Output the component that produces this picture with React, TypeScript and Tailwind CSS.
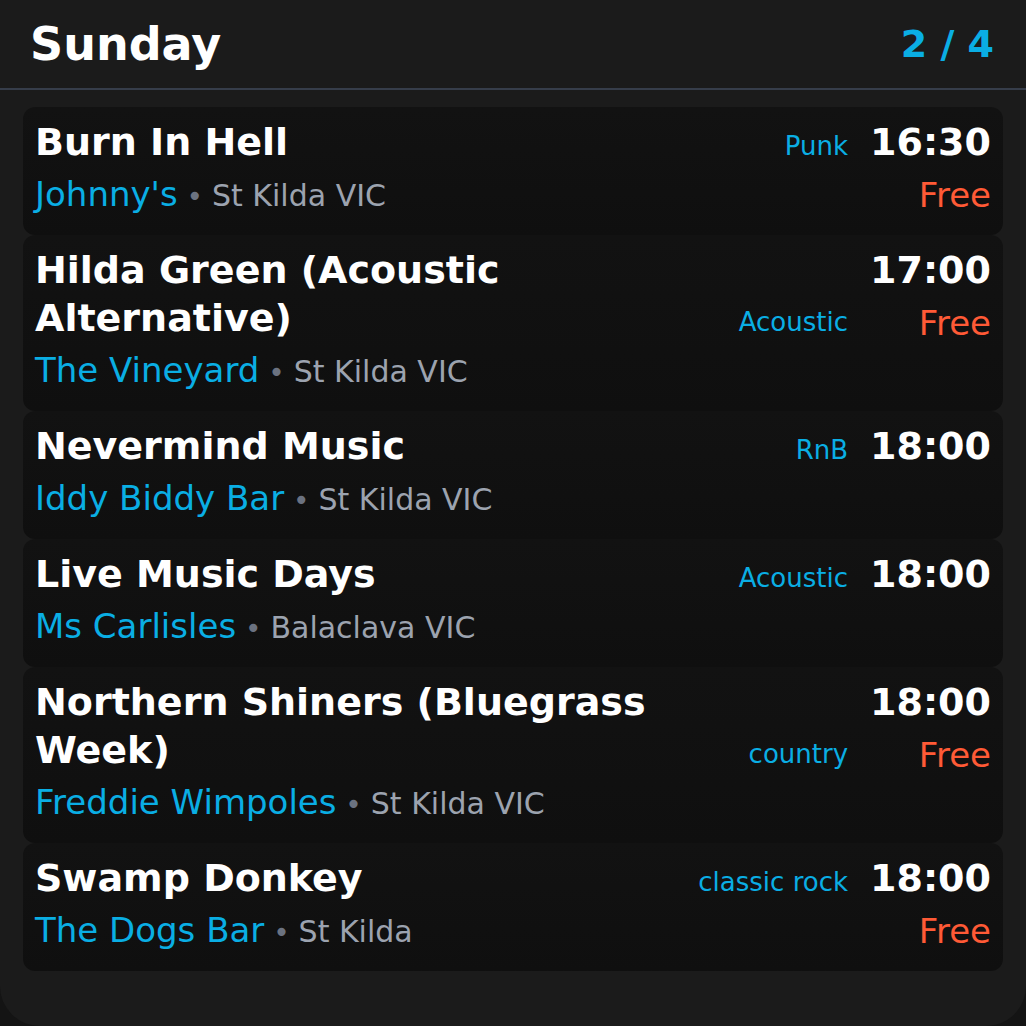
import React from "react";

type Gig = {
  title: string;
  venue: string;
  suburb: string;
  genre: string;
  time: string;
  free: boolean;
};

const gigs: Gig[] = [
  { title: "Burn In Hell", venue: "Johnny's", suburb: "St Kilda VIC", genre: "Punk", time: "16:30", free: true },
  { title: "Hilda Green (Acoustic Alternative)", venue: "The Vineyard", suburb: "St Kilda VIC", genre: "Acoustic", time: "17:00", free: true },
  { title: "Nevermind Music", venue: "Iddy Biddy Bar", suburb: "St Kilda VIC", genre: "RnB", time: "18:00", free: false },
  { title: "Live Music Days", venue: "Ms Carlisles", suburb: "Balaclava VIC", genre: "Acoustic", time: "18:00", free: false },
  { title: "Northern Shiners (Bluegrass Week)", venue: "Freddie Wimpoles", suburb: "St Kilda VIC", genre: "country", time: "18:00", free: true },
  { title: "Swamp Donkey", venue: "The Dogs Bar", suburb: "St Kilda", genre: "classic rock", time: "18:00", free: true },
];

function GigCard({ gig }: { gig: Gig }) {
  return (
    <div className="flex min-h-[128px] gap-[22px] rounded-xl bg-gradient-to-b from-[#121212] to-[#0f0f0f] px-3 pt-[11px] pb-[18px]">
      <div className="flex-1 min-w-0">
        <div className="flex gap-6 [align-items:last_baseline]">
          <h2 className="flex-1 text-[38px] leading-[48px] font-bold text-white">{gig.title}</h2>
          <span className="shrink-0 text-[26px] leading-[32px] text-[#0aaee4]">{gig.genre}</span>
        </div>
        <p className="mt-[8px] text-[34px] leading-[40px] whitespace-nowrap">
          <span className="text-[#0aaee4]">{gig.venue}</span>
          <span className="text-[28px] text-[#6b7280]"> • </span>
          <span className="text-[30px] text-[#9ca3af]">{gig.suburb}</span>
        </p>
      </div>
      <div className="flex flex-col items-end shrink-0">
        <span className="text-[38px] leading-[48px] font-bold text-white">{gig.time}</span>
        {gig.free && (
          <span className="mt-[9px] text-[34px] leading-[40px] text-[#ff5a36]">Free</span>
        )}
      </div>
    </div>
  );
}

export default function App() {
  return (
    <div className="min-h-screen bg-[#141414]" style={{ fontFamily: '"DejaVu Sans", Verdana, sans-serif' }}>
      <div className="h-[1026px] rounded-b-[40px] bg-[#1b1b1b] overflow-hidden">
        <header className="flex h-[90px] items-center justify-between border-b-2 border-[#363d4a] pl-[30px] pr-8">
          <h1 className="text-[46px] font-bold text-white">Sunday</h1>
          <span className="text-[38px] font-bold text-[#0aaee4]">2 / 4</span>
        </header>
        <main className="flex flex-col px-[23px] pt-[17px]">
          {gigs.map((gig) => (
            <GigCard key={gig.title} gig={gig} />
          ))}
        </main>
      </div>
    </div>
  );
}
